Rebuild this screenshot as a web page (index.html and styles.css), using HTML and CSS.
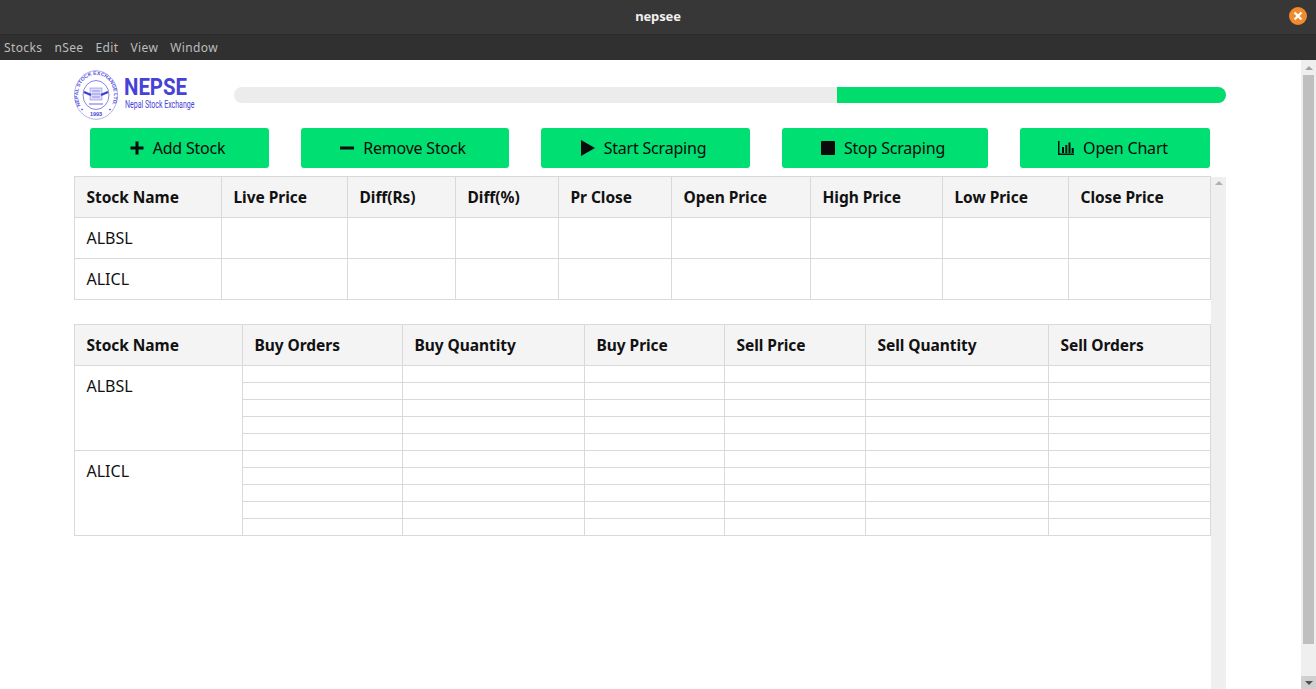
FILE: index.html
```html
<!DOCTYPE html>
<html lang="en">
<head>
<meta charset="utf-8">
<title>nepsee</title>
<link rel="stylesheet" href="styles.css">
</head>
<body>
<div class="window">
  <header class="titlebar">
    <span class="title">nepsee</span>
    <span class="close"><svg width="10" height="10" viewBox="0 0 10 10"><path d="M1.5 1.5l7 7M8.5 1.5l-7 7" stroke="#fff" stroke-width="2.2" fill="none"/></svg></span>
  </header>
  <nav class="menubar"><span>Stocks</span><span>nSee</span><span>Edit</span><span>View</span><span>Window</span></nav>
  <div class="viewport">
    <main class="page">
      <div class="top">
        <div class="logo">
          <svg class="seal" width="44" height="50" viewBox="0 0 44 50" preserveAspectRatio="none">
            <defs><path id="arc" d="M6.4 35.5a18 20.5 0 1 1 31.2 0"/></defs>
            <ellipse cx="22" cy="25" rx="21.5" ry="24.3" fill="#fff" stroke="#b3b1ee" stroke-width="1"/>
            <ellipse cx="22" cy="25" rx="13" ry="14.5" fill="none" stroke="#6a66df" stroke-width=".8"/>
            <text class="seal-text"><textPath href="#arc" textLength="80" lengthAdjust="spacingAndGlyphs">NEPAL STOCK EXCHANGE LTD.</textPath></text>
            <text class="seal-year" x="22" y="46" text-anchor="middle">1993</text>
            <rect x="16" y="18" width="12" height="12" fill="#dedcf8" stroke="#8a87e6" stroke-width=".6"/>
            <path d="M10 22l7 3M34 22l-7 3" stroke="#3f3bd6" stroke-width="2.4"/>
            <path d="M18 21h8M18 24h8M18 27h8" stroke="#7f7be4" stroke-width=".8"/>
            <path d="M15 34h14" stroke="#6a66df" stroke-width="1"/>
            <path d="M8 38.5l1 1-1 1-1-1zM36 38.5l1 1-1 1-1-1z" fill="#3f3bd6"/>
          </svg>
          <div class="wordmark"><span class="brand">NEPSE</span><span class="sub">Nepal Stock Exchange</span></div>
        </div>
        <div class="progress"><div class="progress-fill"></div></div>
      </div>
      <div class="toolbar">
        <button class="btn"><svg width="14" height="14" viewBox="0 0 14 14"><path d="M7 0.5v13M.5 7h13" stroke="#0b0b0b" stroke-width="3" fill="none"/></svg>Add Stock</button>
        <button class="btn"><svg width="14" height="14" viewBox="0 0 14 14"><path d="M0 7h14" stroke="#0b0b0b" stroke-width="3" fill="none"/></svg>Remove Stock</button>
        <button class="btn"><svg width="14" height="16" viewBox="0 0 14 16"><path d="M0 0l14 8-14 8z" fill="#0b0b0b"/></svg>Start Scraping</button>
        <button class="btn"><svg width="14" height="14" viewBox="0 0 14 14"><rect width="14" height="14" rx="1" fill="#0b0b0b"/></svg>Stop Scraping</button>
        <button class="btn"><svg width="16" height="14" viewBox="0 0 16 14"><path d="M.7 0v13.3H16" stroke="#0b0b0b" stroke-width="1.5" fill="none"/><path d="M4 6h2v6H4zM7.3 4h2v8h-2zM10.5 1.5h2V12h-2zM13.7 7h2v5h-2z" fill="#0b0b0b"/></svg>Open Chart</button>
      </div>
      <div class="tables">
        <div class="tables-inner">
          <table class="grid prices">
            <thead><tr><th>Stock Name</th><th>Live Price</th><th>Diff(Rs)</th><th>Diff(%)</th><th>Pr Close</th><th>Open Price</th><th>High Price</th><th>Low Price</th><th>Close Price</th></tr></thead>
            <tbody>
              <tr><td>ALBSL</td><td></td><td></td><td></td><td></td><td></td><td></td><td></td><td></td></tr>
              <tr><td>ALICL</td><td></td><td></td><td></td><td></td><td></td><td></td><td></td><td></td></tr>
            </tbody>
          </table>
          <table class="grid orders">
            <thead><tr><th>Stock Name</th><th>Buy Orders</th><th>Buy Quantity</th><th>Buy Price</th><th>Sell Price</th><th>Sell Quantity</th><th>Sell Orders</th></tr></thead>
            <tbody>
              <tr><td class="name" rowspan="5">ALBSL</td><td></td><td></td><td></td><td></td><td></td><td></td></tr>
              <tr><td></td><td></td><td></td><td></td><td></td><td></td></tr>
              <tr><td></td><td></td><td></td><td></td><td></td><td></td></tr>
              <tr><td></td><td></td><td></td><td></td><td></td><td></td></tr>
              <tr><td></td><td></td><td></td><td></td><td></td><td></td></tr>
              <tr><td class="name" rowspan="5">ALICL</td><td></td><td></td><td></td><td></td><td></td><td></td></tr>
              <tr><td></td><td></td><td></td><td></td><td></td><td></td></tr>
              <tr><td></td><td></td><td></td><td></td><td></td><td></td></tr>
              <tr><td></td><td></td><td></td><td></td><td></td><td></td></tr>
              <tr><td></td><td></td><td></td><td></td><td></td><td></td></tr>
            </tbody>
          </table>
        </div>
        <div class="inner-scroll"><span class="arrow-up dim"></span></div>
      </div>
    </main>
    <aside class="page-scroll">
      <span class="sb-btn"><span class="arrow-up"></span></span>
      <div class="sb-track"><div class="sb-thumb"></div></div>
      <span class="sb-btn down"><span class="arrow-down"></span></span>
    </aside>
  </div>
</div>
</body>
</html>
```
FILE: styles.css
```css
* { box-sizing: border-box; }
html, body { margin: 0; height: 100%; overflow: hidden; }
body { font-family: "Noto Sans", "Open Sans", sans-serif; color: #111; background: #fff; }
.window { display: flex; flex-direction: column; height: 689px; }

.titlebar { height: 35px; flex: none; background: #373737; border-bottom: 1px solid #2a2a2a; display: flex; align-items: center; justify-content: center; position: relative; padding-bottom: 2px; }
.title { color: #f0f0f0; font-size: 13px; font-weight: 700; letter-spacing: -.15px; }
.close { position: absolute; left: 1289px; top: 7px; width: 18px; height: 18px; border-radius: 50%; background: #f28a2c; display: flex; align-items: center; justify-content: center; }

.menubar { height: 25px; flex: none; background: #303030; display: flex; gap: 12px; padding: 0 4px; align-items: center; color: #bdbdbd; font-size: 12px; letter-spacing: .38px; }

.viewport { flex: 1; display: flex; min-height: 0; }
.page { flex: 1; min-width: 0; padding-left: 74px; padding-right: 75px; display: flex; flex-direction: column; }

.top { height: 68px; flex: none; display: flex; align-items: flex-start; }
.logo { width: 160px; flex: none; display: flex; align-items: flex-start; padding-top: 10px; }
.seal { flex: none; display: block; overflow: visible; }
.seal-text { font-family: "Liberation Sans", sans-serif; font-size: 5px; font-weight: 700; fill: #5551dc; }
.seal-year { font-family: "Liberation Sans", sans-serif; font-size: 5.5px; font-weight: 700; fill: #4642d8; }
.wordmark { display: flex; flex-direction: column; align-items: flex-start; margin-left: 6px; padding-top: 5px; color: #4642d8; font-family: "Roboto", sans-serif; }
.brand { font-size: 24px; font-weight: 700; line-height: 24px; transform: scaleX(.85); transform-origin: left; }
.sub { font-size: 10px; line-height: 11px; margin: 0 0 0 1px; white-space: nowrap; transform: scaleX(.7); transform-origin: left; }
.progress { width: 992px; height: 16px; margin-top: 27px; border-radius: 8px; background: #ececec; display: flex; justify-content: flex-end; overflow: hidden; }
.progress-fill { width: 389px; background: #00dd6d; }

.toolbar { flex: none; display: grid; grid-template-columns: 179px 208px 209px 206px 190px; gap: 32px; padding-left: 16px; height: 40px; }
.btn { border: 0; border-radius: 3px; background: #00df71; color: #0b0b0b; font: 16px "Noto Sans", sans-serif; letter-spacing: -.2px; display: flex; align-items: center; justify-content: center; gap: 9px; padding: 0 4px 0 0; }
.btn svg { flex: none; }

.tables { flex: 1; min-height: 0; display: flex; margin-top: 8px; }
.tables-inner { width: 1137px; flex: none; }
.inner-scroll { width: 15px; flex: none; background: #efefef; margin-top: 1px; display: flex; justify-content: center; padding-top: 4px; }

.grid { border-collapse: collapse; table-layout: fixed; width: 1136px; font-size: 16px; }
.grid th, .grid td { border: 1px solid #d9d9d9; padding: 0 11.5px; text-align: left; }
.grid th { height: 41px; background: #f4f4f4; font-weight: 700; font-size: 15.5px; letter-spacing: -.05px; white-space: nowrap; }
.prices td { height: 41px; }
.orders { margin-top: 24px; }
.orders td { height: 17px; }
.orders .name { vertical-align: top; padding-top: 9px; line-height: 22px; }

.prices th:nth-child(1) { width: 147px; }
.prices th:nth-child(2) { width: 126px; }
.prices th:nth-child(3) { width: 108px; }
.prices th:nth-child(4) { width: 103px; }
.prices th:nth-child(5) { width: 113px; }
.prices th:nth-child(6) { width: 139px; }
.prices th:nth-child(7) { width: 132px; }
.prices th:nth-child(8) { width: 126px; }
.prices th:nth-child(9) { width: 142px; }

.orders th:nth-child(1) { width: 168px; }
.orders th:nth-child(2) { width: 160px; }
.orders th:nth-child(3) { width: 182px; }
.orders th:nth-child(4) { width: 140px; }
.orders th:nth-child(5) { width: 141px; }
.orders th:nth-child(6) { width: 183px; }
.orders th:nth-child(7) { width: 162px; }

.page-scroll { width: 15px; flex: none; background: #efefef; display: flex; flex-direction: column; }
.sb-btn { height: 15px; flex: none; display: flex; align-items: center; justify-content: center; }
.sb-btn.down { height: 13px; background: #d0d0d0; }
.sb-track { flex: 1; display: flex; flex-direction: column; padding: 0 2px; }
.sb-thumb { height: 569px; background: #bfbfbf; }
.arrow-up { width: 0; height: 0; border-left: 4px solid transparent; border-right: 4px solid transparent; border-bottom: 4px solid #a3a3a3; }
.arrow-down { width: 0; height: 0; border-left: 4px solid transparent; border-right: 4px solid transparent; border-top: 4px solid #505050; }
.dim { border-bottom-color: #b0b0b0; }
```
